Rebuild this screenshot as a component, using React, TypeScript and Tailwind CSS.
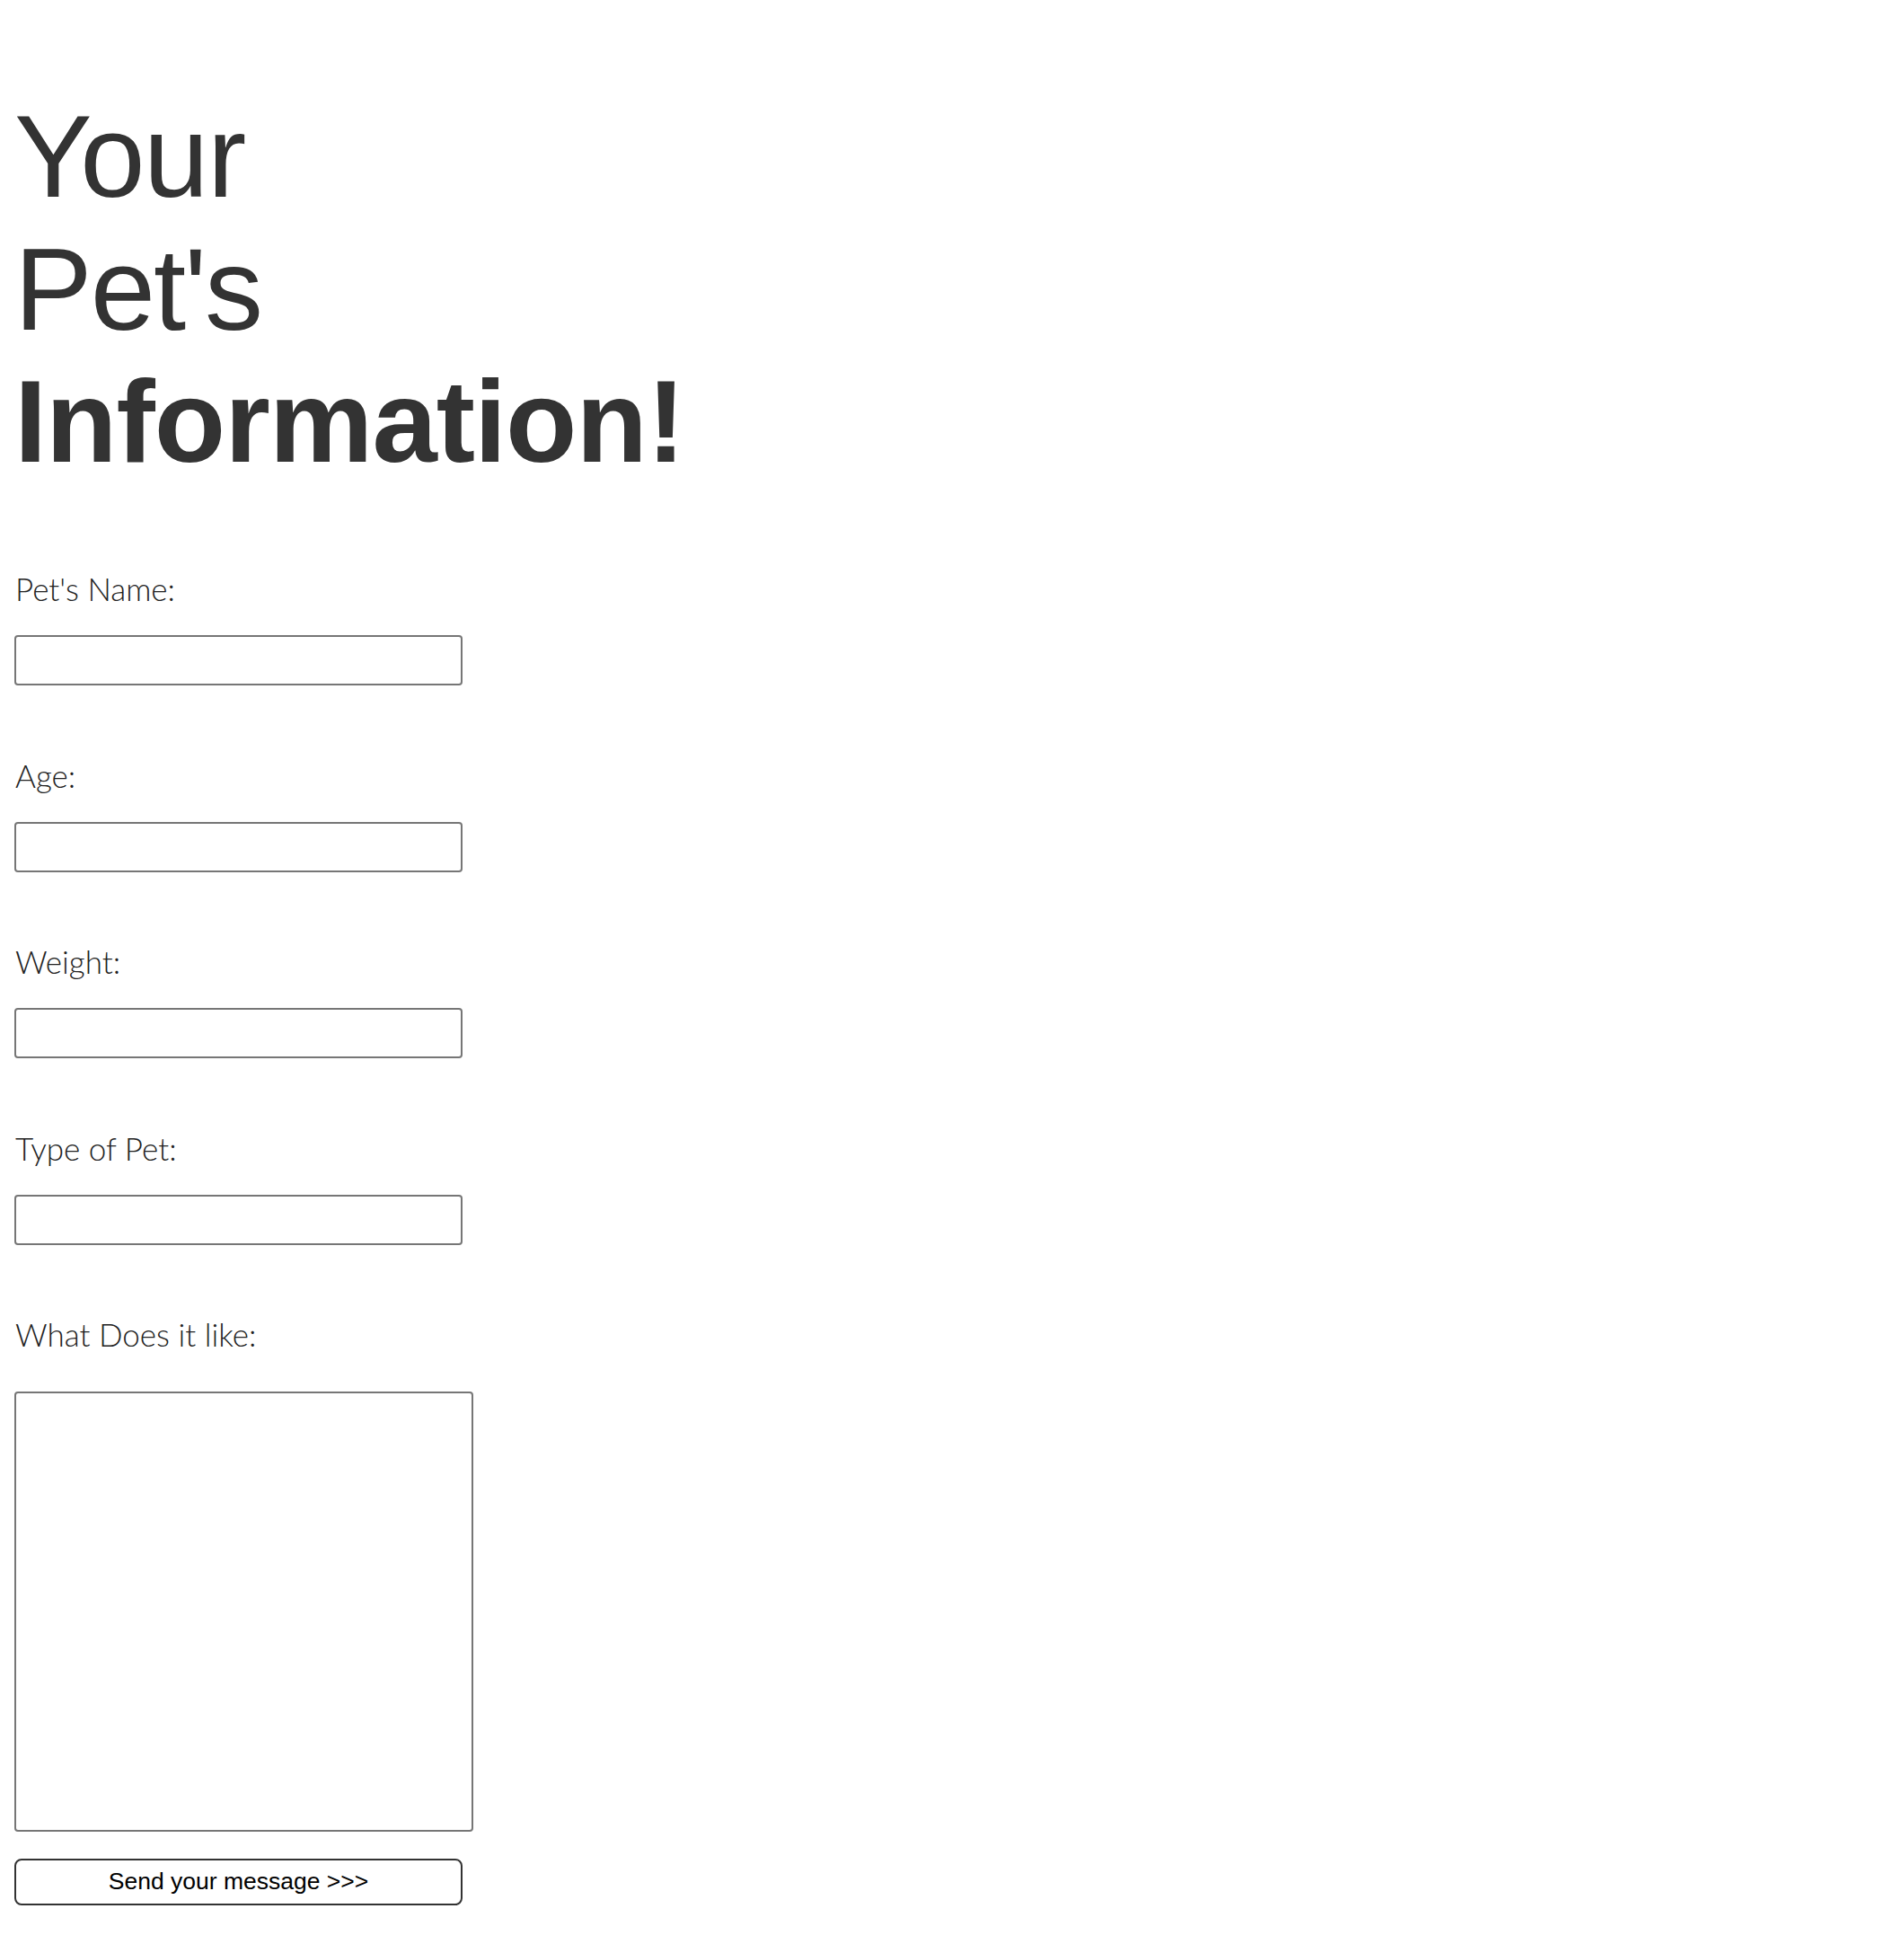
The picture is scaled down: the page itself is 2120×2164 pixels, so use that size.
import React from 'react';

const fields = ["Pet's Name:", 'Age:', 'Weight:', 'Type of Pet:'];

const App = () => {
  return (
    <div className="min-h-screen bg-white pl-4 pt-[101px] pb-10">
      <h1 className="font-['Liberation_Sans',Arial,sans-serif] text-[130px] leading-[147.5px] text-[#333333]">
        <span className="block font-normal tracking-[-1.5px]">Your</span>
        <span className="block font-normal tracking-[-2px]">Pet's</span>
        <span className="block font-bold tracking-[-1px]">Information!</span>
      </h1>

      <form className="mt-[91.5px] font-['Lato',sans-serif] text-[#222222]">
        {fields.map((label) => (
          <div key={label} className="mb-[79.5px]">
            <label className="block h-10 pl-[1px] text-[35px] font-light leading-10">{label}</label>
            <input
              type="text"
              className="mt-[32px] block h-[56px] w-[499px] rounded-[4px] border-2 border-[#767676] bg-white"
            />
          </div>
        ))}

        <div>
          <label className="block h-10 pl-[1px] text-[35px] font-light leading-10">What Does it like:</label>
          <textarea className="mt-[44px] block h-[490px] w-[511px] resize-none rounded-[4px] border-2 border-[#767676] bg-white" />
        </div>

        <button
          type="button"
          className="mt-[30px] block h-[52px] w-[499px] rounded-[8px] border-2 border-[#333333] bg-white font-['Liberation_Sans',Arial,sans-serif] text-[26.5px] text-black"
        >
          Send your message &gt;&gt;&gt;
        </button>
      </form>
    </div>
  );
};

export default App;
